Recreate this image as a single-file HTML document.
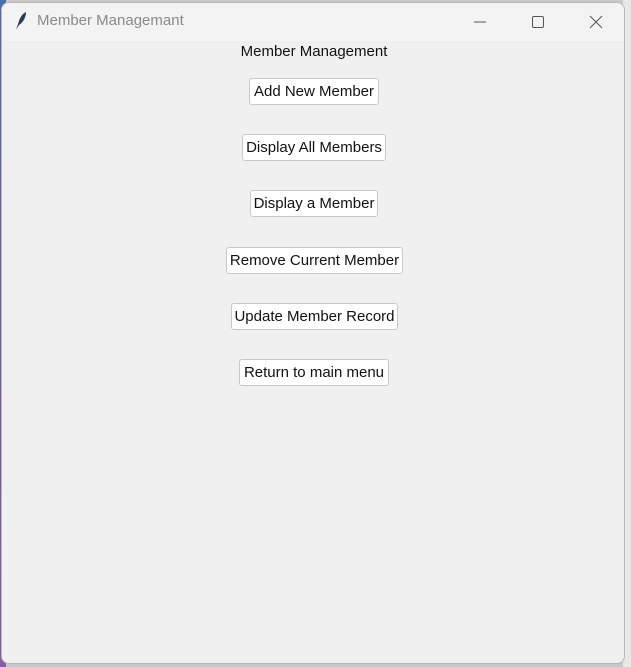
<!DOCTYPE html>
<html><head><style>
body{margin:0;width:631px;height:667px;background:#c8c8cc;position:relative;overflow:hidden;font-family:"Liberation Sans",sans-serif}
.bgl{position:absolute;left:0;top:0;width:6px;height:667px;background:linear-gradient(#4a6fb0,#7a5aa0 60%,#8a5aa8)}
.bgr{position:absolute;right:0;top:0;width:8px;height:667px;background:#e8e8e8}
.win{position:absolute;left:1px;top:2px;width:624px;height:662px;background:#f0f0f0;border-radius:8px;border:1px solid #b8b8b8;box-sizing:border-box;overflow:hidden}
.tb{height:38px;background:#f3f3f3;position:relative}
.tt{position:absolute;left:35px;top:9px;font-size:15px;color:#8a8a8a}
.lbl{position:absolute;top:40px;left:0;width:624px;text-align:center;font-size:15px;color:#111}
.b{position:absolute;height:27px;background:#fff;border:1px solid #c8c8c8;border-radius:3px;box-sizing:border-box;font-size:15px;color:#111;text-align:center;line-height:25px;white-space:nowrap;letter-spacing:0}
</style></head><body>
<div class="bgl"></div><div class="bgr"></div>
<div class="win">
<div class="tb">
<svg style="position:absolute;left:12px;top:8px" width="14" height="20" viewBox="0 0 14 20"><path d="M2 19 L5 10 C7 4 10 2 12 1 C12 5 10 11 5 14 Z" fill="#2a3a5a"/></svg>
<div class="tt">Member Managemant</div>
<svg style="position:absolute;left:470px;top:10px" width="140" height="18"><line x1="2" y1="9" x2="14" y2="9" stroke="#555"/><rect x="60.5" y="3.5" width="11" height="11" rx="1.5" fill="none" stroke="#555"/><path d="M118 3 L130 15 M130 3 L118 15" stroke="#555"/></svg>
</div>
<div class="lbl">Member Management</div>
<div class="b" style="left:247px;top:75px;width:130px">Add New Member</div>
<div class="b" style="left:240px;top:131px;width:144px">Display All Members</div>
<div class="b" style="left:248px;top:187px;width:128px">Display a Member</div>
<div class="b" style="left:224px;top:244px;width:177px">Remove Current Member</div>
<div class="b" style="left:229px;top:300px;width:167px">Update Member Record</div>
<div class="b" style="left:237px;top:356px;width:150px">Return to main menu</div>
</div>
</body></html>
